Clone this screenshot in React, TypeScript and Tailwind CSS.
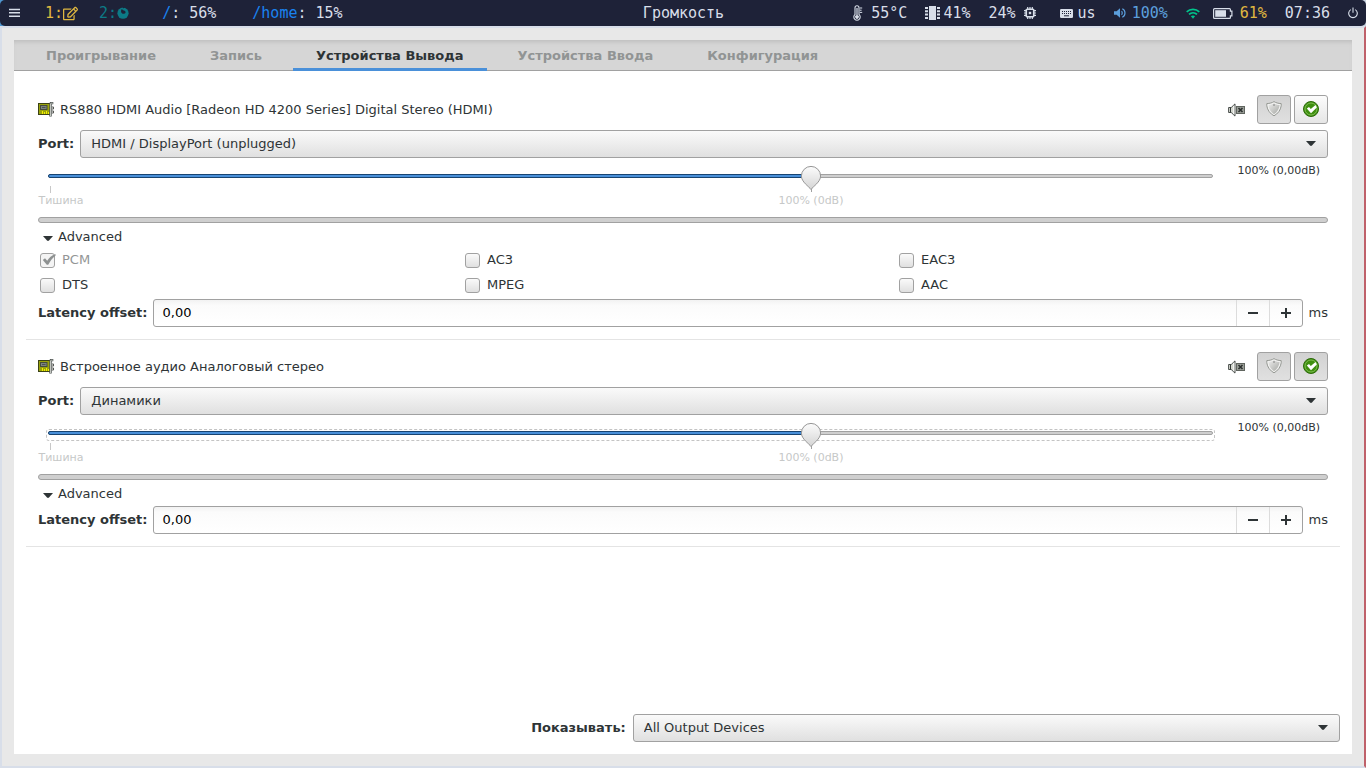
import { useState } from "react";
import type { ReactNode } from "react";
import { FaRegEdit } from "react-icons/fa";

function MenuIcon() {
  return (
    <svg width="11" height="10" viewBox="0 0 11 10" aria-hidden="true">
      <path d="M0 1.5h11M0 4.8h11M0 8.2h11" stroke="currentColor" strokeWidth="1.4" />
    </svg>
  );
}

function FirefoxIcon() {
  return (
    <svg width="12" height="12" viewBox="0 0 12 12" aria-hidden="true">
      <circle cx="6" cy="6.200" r="5.600" fill="currentColor" />
      <path d="M4.500 2.200c1.200.2 1.400 1 2.300 1.200 1.200.3 2.100 1.200 1.700 2.300-.5 1.200-2.200 1.500-3.300.8C4 5.800 3.600 4 4.500 2.200z" fill="#1e2238" />
      <path d="M5.400 0L7.800 0 6.600 1.500z" fill="#1e2238" />
    </svg>
  );
}

function ThermometerIcon() {
  return (
    <svg width="10" height="16" viewBox="0 0 10 16" fill="none" aria-hidden="true">
      <path d="M2 9.5V2.7a2 2 0 0 1 4 0v6.8a3.2 3.2 0 1 1-4 0z" stroke="currentColor" strokeWidth="1.1" />
      <path d="M3.4 3h1.2v7.2a1.8 1.8 0 1 1-1.2 0z" fill="currentColor" />
      <path d="M6.8 3h2.4M6.8 5.2h1.8M6.8 7.4h2.4" stroke="currentColor" strokeWidth="1" />
    </svg>
  );
}

function MemoryIcon() {
  return (
    <svg width="15" height="14" viewBox="0 0 15 14" aria-hidden="true">
      <path d="M4 0h7v14H4z" fill="currentColor" />
      <path d="M1.500 1v12M13.500 1v12" stroke="currentColor" strokeWidth="3" strokeDasharray="2 1.300" />
    </svg>
  );
}

function ChipIcon() {
  return (
    <svg width="12" height="12" viewBox="0 0 12 12" fill="none" aria-hidden="true">
      <rect x="2.250" y="2.250" width="7.500" height="7.500" rx="1" stroke="currentColor" strokeWidth="1.700" />
      <rect x="4.800" y="4.800" width="2.400" height="2.400" fill="currentColor" />
      <path d="M3.700 0v2M6 0v2M8.300 0v2M3.700 10v2M6 10v2M8.300 10v2M0 3.700h2M0 6h2M0 8.300h2M10 3.700h2M10 6h2M10 8.300h2" stroke="currentColor" strokeWidth="1.200" />
    </svg>
  );
}

function KeyboardIcon() {
  return (
    <svg width="13" height="9" viewBox="0 0 13 9" aria-hidden="true">
      <rect width="13" height="9" rx="1.2" fill="currentColor" />
      <path d="M2 2.5h9M2 4.5h9" stroke="#1e2238" strokeDasharray="1 1" />
      <path d="M4 6.8h5" stroke="#1e2238" />
    </svg>
  );
}

function VolumeIcon() {
  return (
    <svg width="12" height="10" viewBox="0 0 12 10" fill="none" aria-hidden="true">
      <path d="M0 3.2h2.6L6 .3v9.4L2.6 6.8H0z" fill="currentColor" />
      <path d="M7.5 3.2c1 .9 1 2.7 0 3.6M8.3.8c3.6 1.6 3.6 6.8 0 8.4" stroke="currentColor" strokeWidth="1.2" />
    </svg>
  );
}

function WifiIcon() {
  return (
    <svg width="14" height="11" viewBox="0 0 14 11" fill="none" aria-hidden="true">
      <path d="M.7 3.9c3.500-3.400 9.100-3.400 12.600 0M3 6.400c2.300-2.200 5.700-2.200 8 0" stroke="currentColor" strokeWidth="1.700" />
      <path d="M4.900 8.300c1.200-1.100 3-1.100 4.200 0L7 10.800z" fill="currentColor" />
    </svg>
  );
}

function BatteryIcon() {
  return (
    <svg width="20" height="11" viewBox="0 0 20 11" fill="none" aria-hidden="true">
      <path d="M1.5.6h15q.9 0 .9.9v1.700h1.500v4.600h-1.500v1.700q0 .9-.9.9h-15q-.9 0-.9-.9v-8q0-.9.9-.9z" stroke="currentColor" strokeWidth="1.200" />
      <path d="M2.200 2.200H13v6.600H2.200z" fill="currentColor" />
    </svg>
  );
}

function PowerIcon() {
  return (
    <svg width="10" height="12" viewBox="0 0 10 12" fill="none" aria-hidden="true">
      <path d="M2.800 2.600a4.300 4.300 0 1 0 4.400 0M5 .4v5.400" stroke="currentColor" strokeWidth="1.100" />
    </svg>
  );
}

function CardIcon() {
  return (
    <svg width="16" height="16" viewBox="0 0 16 16" aria-hidden="true">
      <rect x=".5" y="1.500" width="12" height="11" fill="#9aa30c" stroke="#3c4216" />
      <rect x="2.500" y="3.500" width="6.500" height="4" fill="#7c8480" stroke="#454c3c" />
      <path d="M4 5.500h3.500" stroke="#4c5350" />
      <path d="M4.500 9v3M6.500 10v2M8.500 9v3M10.500 10v2" stroke="#f3f000" />
      <path d="M12.500 14.500V2q0-1 1-1h1.800" fill="none" stroke="#4b514f" strokeWidth="2.400" />
      <path d="M12.500 14V2q0-.8.800-.8h1.500" fill="none" stroke="#c4c7c1" />
      <path d="M13.800 5h1.700v2h-1.700M13.800 9h1.700v2h-1.700" fill="none" stroke="#555753" />
    </svg>
  );
}

function MutedIcon() {
  return (
    <svg width="17" height="14" viewBox="0 0 17 14" aria-hidden="true">
      <path d="M.6 4.500h2.600L7 .9v12.200L3.200 9.500H.6z" fill="#d3d7cf" stroke="#4a4f4c" />
      <path d="M2.500 4.500v5" stroke="#333835" />
      <path d="M5.800 2.800v8.400" stroke="#fff" />
      <rect x="8.500" y="3.500" width="8" height="7" fill="#999d97" stroke="#60655f" />
      <path d="M10.500 5l4 4M14.500 5l-4 4" stroke="#2a2f2d" strokeWidth="1.600" />
    </svg>
  );
}

function ShieldIcon() {
  return (
    <svg width="16" height="16" viewBox="0 0 16 16" aria-hidden="true">
      <defs>
        <linearGradient id="shield" x1="0" y1="0" x2="1" y2="1">
          <stop offset="0" stopColor="#ededec" />
          <stop offset="1" stopColor="#a5a7a3" />
        </linearGradient>
      </defs>
      <path d="M8 .6C6.200 1.800 3.700 2.500.8 2.600v2.200C1.400 9 4 12.700 8 14.800c4-2.100 6.600-5.800 7.200-10V2.600C12.300 2.500 9.800 1.800 8 .6z" fill="#f2f2f1" stroke="#959893" />
      <path d="M8 2.300C6.400 3.400 4.600 4 2.400 4.100 2.800 7.900 4.800 11.300 8 13.200c3.200-1.900 5.200-5.300 5.600-9.100C11.400 4 9.600 3.400 8 2.300z" fill="url(#shield)" />
      <circle cx="8" cy="4" r=".8" fill="#777" />
    </svg>
  );
}

function DefaultIcon() {
  return (
    <svg width="16" height="16" viewBox="0 0 16 16" aria-hidden="true">
      <circle cx="8" cy="8" r="7.500" fill="#3f8f10" stroke="#2d6b0b" />
      <circle cx="8" cy="8" r="6" fill="none" stroke="#8cc760" strokeWidth=".8" />
      <path d="M3.800 7.600L6 6l1.800 2L12.500 4l1.300 2.400L8 12.300z" fill="#fff" />
    </svg>
  );
}

function Arrow({ className = "" }: { className?: string }) {
  return (
    <svg className={className} width="10" height="5" viewBox="0 0 10 5" aria-hidden="true">
      <path d="M0 0h10L6 4.600q-1 .8-2 0z" fill="#2e3436" />
    </svg>
  );
}

function TopBar() {
  return (
    <header className="grid h-[26px] shrink-0 grid-cols-[1fr_auto_1fr] items-center rounded-[5px] bg-[#1e2238] pr-2 pl-[9px] font-['DejaVu_Sans_Mono',monospace] text-[15px] leading-5 whitespace-pre text-[#d8dee9]">
      <nav className="flex items-center">
        <button aria-label="Меню" className="mr-[25px]">
          <MenuIcon />
        </button>
        <button className="mr-[21px] flex items-center text-[#e0b840]">
          1:<FaRegEdit size={15} />
        </button>
        <button className="mr-[33px] flex items-center text-[#0c7a86]">
          2:<FirefoxIcon />
        </button>
        <span className="mr-9">
          <span className="text-[#1a82f0]">/</span>: 56%
        </span>
        <span>
          <span className="text-[#1a82f0]">/home</span>: 15%
        </span>
      </nav>
      <h1>Громкость</h1>
      <div className="flex items-center justify-end">
        <span className="mr-[18px] flex items-center gap-2">
          <ThermometerIcon />
          55°C
        </span>
        <span className="mr-[18px] flex items-center gap-[3px]">
          <MemoryIcon />
          41%
        </span>
        <span className="mr-6 flex items-center gap-2">
          24%
          <ChipIcon />
        </span>
        <span className="mr-[18px] flex items-center gap-[5px]">
          <KeyboardIcon />
          us
        </span>
        <span className="mr-[18px] flex items-center gap-[6px] text-[#5c9fdc]">
          <VolumeIcon />
          100%
        </span>
        <span className="mr-[13px] text-[#00c48c]">
          <WifiIcon />
        </span>
        <span className="mr-[18px] flex items-center gap-[7px]">
          <BatteryIcon />
          <span className="text-[#e0b840]">61%</span>
        </span>
        <time className="mr-[18px]">07:36</time>
        <button aria-label="Выключение">
          <PowerIcon />
        </button>
      </div>
    </header>
  );
}

function Combo({ id, options, label }: { id: string; options: string[]; label?: string }) {
  return (
    <div className="relative w-full">
      <select
        id={id}
        aria-label={label}
        className="block h-7 w-full appearance-none rounded-[3px] border border-[#a1a1a1] bg-linear-to-b from-[#fafafa] to-[#e0e0e0] pr-8 pl-[10px] text-[13px] text-[#2e3436]"
      >
        {options.map((o) => (
          <option key={o}>{o}</option>
        ))}
      </select>
      <Arrow className="pointer-events-none absolute top-[11px] right-3" />
    </div>
  );
}

function IconToggle({ label, pressed, children }: { label: string; pressed: boolean; children: ReactNode }) {
  const [on, setOn] = useState(pressed);
  return (
    <button
      aria-label={label}
      aria-pressed={on}
      onClick={() => setOn(!on)}
      className={
        "flex h-[29px] w-[34px] items-center justify-center rounded-[3px] border border-[#a1a1a1] pb-px " +
        (on ? "bg-linear-to-b from-[#d2d2d2] to-[#e0e0e0]" : "bg-linear-to-b from-[#fcfcfc] to-[#e6e6e6]")
      }
    >
      {children}
    </button>
  );
}

function VolumeSlider({ name, focused }: { name: string; focused: boolean }) {
  const [volume, setVolume] = useState(100);
  const max = 152.7;
  const percent = (v: number) => `${(v / max) * 100}%`;
  return (
    <div className="flex h-[59px] items-start">
      <div className="flex-1 pr-3 pl-[10px]">
        <div className="relative h-[52px]">
          {focused && (
            <div className="absolute -inset-x-[2px] top-[14px] h-3 rounded-[3px] border border-dashed border-[#c4c4c4]" />
          )}
          <div className="absolute inset-x-0 top-4 h-1 rounded-full border border-[#a1a1a1] bg-[#cfcfcf]" />
          <div
            className="absolute top-4 left-0 h-1 rounded-full border border-[#184472] bg-[#4a90d9]"
            style={{ width: percent(volume) }}
          />
          <span className="absolute top-7 left-[2px] h-[7px] w-px bg-[#c8c8c8]" />
          <span className="absolute top-9 left-[13px] -translate-x-1/2 text-[11px] leading-[14px] text-[#c6c8c8]">
            Тишина
          </span>
          <span className="absolute top-6 h-[10px] w-px bg-[#a1a1a1]" style={{ left: percent(100) }} />
          <span
            className="absolute top-9 -translate-x-1/2 text-[11px] leading-[14px] whitespace-nowrap text-[#c6c8c8]"
            style={{ left: percent(100) }}
          >
            100% (0dB)
          </span>
          <svg
            className="absolute top-[7px] -translate-x-1/2"
            style={{ left: percent(volume) }}
            width="21"
            height="25"
            viewBox="0 0 21 25"
            aria-hidden="true"
          >
            <defs>
              <linearGradient id="knob" x1="0" y1="0" x2="0" y2="1">
                <stop offset="0" stopColor="#fcfcfc" />
                <stop offset="1" stopColor="#d4d4d4" />
              </linearGradient>
            </defs>
            <path
              d="M10.500 24.500C8.500 21.500.9 17 .9 11a9.600 9.600 0 1 1 19.200 0C20.100 17 12.500 21.500 10.500 24.500z"
              fill="url(#knob)"
              stroke="#969696"
            />
          </svg>
          <input
            type="range"
            aria-label={`Громкость: ${name}`}
            min={0}
            max={153}
            value={volume}
            onChange={(e) => setVolume(Number(e.target.value))}
            className="absolute inset-x-0 top-2 h-5 w-full cursor-pointer appearance-none bg-transparent outline-none [&::-webkit-slider-thumb]:h-5 [&::-webkit-slider-thumb]:w-5 [&::-webkit-slider-thumb]:appearance-none"
          />
        </div>
      </div>
      <output className="w-[103px] pt-[6px] pr-2 text-right text-[11px] leading-[14px]">{volume}% (0,00dB)</output>
    </div>
  );
}

function Check({ label, locked = false }: { label: string; locked?: boolean }) {
  const [on, setOn] = useState(locked);
  return (
    <label className={"flex h-[25px] items-center gap-[7px] pl-[2px] " + (locked ? "text-[#939696]" : "")}>
      <span className="relative h-[15px] w-[15px]">
        <input
          type="checkbox"
          checked={on}
          disabled={locked}
          onChange={() => setOn(!on)}
          className="block h-[15px] w-[15px] appearance-none rounded-[3px] border border-[#a1a1a1] bg-linear-to-b from-[#fafafa] to-[#e0e0e0] disabled:bg-none disabled:bg-[#f4f4f4]"
        />
        {on && (
          <svg className="pointer-events-none absolute top-0 left-[2px]" width="14" height="14" viewBox="0 0 14 14" aria-hidden="true">
            <path d="M.8 7l2.200-1.700 2.200 2.400C7 5 9.500 2.300 13.500 1v1.700C10.500 5 8.500 7.700 6.200 11.700H4.800z" fill="#8e9191" />
          </svg>
        )}
      </span>
      <span className="pb-px">{label}</span>
    </label>
  );
}

type DeviceInfo = {
  id: string;
  name: string;
  port: string;
  formats: string[];
  fallback: boolean;
  focused: boolean;
};

function Device({ device }: { device: DeviceInfo }) {
  const [open, setOpen] = useState(true);
  return (
    <section className="border-b border-[#e4e4e4] p-3">
      <div className="mb-[6px] flex items-center">
        <CardIcon />
        <h2 className="ml-[6px] flex-1">{device.name}</h2>
        <button aria-label="Выключить звук" className="mr-3">
          <MutedIcon />
        </button>
        <div className="flex gap-[3px]">
          <IconToggle label="Заблокировать каналы" pressed>
            <ShieldIcon />
          </IconToggle>
          <IconToggle label="По умолчанию" pressed={device.fallback}>
            <DefaultIcon />
          </IconToggle>
        </div>
      </div>
      <div className="flex items-center gap-[6px]">
        <label htmlFor={`${device.id}-port`} className="font-bold">
          Port:
        </label>
        <Combo id={`${device.id}-port`} options={[device.port]} />
      </div>
      <VolumeSlider name={device.name} focused={device.focused} />
      <div className="h-[6px] rounded-full border border-[#a1a1a1] bg-[#cfcfcf]" />
      <button
        aria-expanded={open}
        onClick={() => setOpen(!open)}
        className="flex h-[25px] items-center gap-[5px] pt-[2px] pl-[5px]"
      >
        <Arrow className="mt-1" />
        Advanced
      </button>
      {open && (
        <>
          {device.formats.length > 0 && (
            <div className="grid grid-cols-[425fr_434fr_431fr]">
              {device.formats.map((f) => (
                <Check key={f} label={f} locked={f === "PCM"} />
              ))}
            </div>
          )}
          <div className="flex items-center pt-px">
            <label htmlFor={`${device.id}-latency`} className="mr-[6px] font-bold whitespace-nowrap">
              Latency offset:
            </label>
            <div className="flex h-7 flex-1 overflow-hidden rounded-[3px] border border-[#a1a1a1] bg-linear-to-b from-[#f2f2f2] via-[#fbfbfb] via-20% to-white">
              <input
                id={`${device.id}-latency`}
                defaultValue="0,00"
                className="min-w-0 flex-1 bg-transparent px-2 text-[13px] text-black outline-none"
              />
              <button aria-label="Уменьшить" className="flex w-[33px] items-center justify-center border-l border-[#dcdcdc]">
                <svg width="10" height="10" viewBox="0 0 10 10" aria-hidden="true">
                  <path d="M0 5h10" stroke="#2e3436" strokeWidth="2" />
                </svg>
              </button>
              <button aria-label="Увеличить" className="flex w-[33px] items-center justify-center border-l border-[#dcdcdc]">
                <svg width="10" height="10" viewBox="0 0 10 10" aria-hidden="true">
                  <path d="M0 5h10M5 0v10" stroke="#2e3436" strokeWidth="2" />
                </svg>
              </button>
            </div>
            <span className="ml-[6px]">ms</span>
          </div>
        </>
      )}
    </section>
  );
}

const tabs = ["Проигрывание", "Запись", "Устройства Вывода", "Устройства Ввода", "Конфигурация"];

const devices: DeviceInfo[] = [
  {
    id: "hdmi",
    name: "RS880 HDMI Audio [Radeon HD 4200 Series] Digital Stereo (HDMI)",
    port: "HDMI / DisplayPort (unplugged)",
    formats: ["PCM", "AC3", "EAC3", "DTS", "MPEG", "AAC"],
    fallback: false,
    focused: false,
  },
  {
    id: "analog",
    name: "Встроенное аудио Аналоговый стерео",
    port: "Динамики",
    formats: [],
    fallback: true,
    focused: true,
  },
];

export default function App() {
  return (
    <div className="flex min-h-screen flex-col bg-linear-to-r from-[#4f96cf] to-[#c9d3e0] font-['DejaVu_Sans',sans-serif] text-[13px] leading-4 text-[#2e3436]">
      <TopBar />
      <main className="flex flex-1 flex-col border-2 border-[#d8dee9] border-r-[#bf616a] bg-[#e8e8e8] p-3">
        <div role="tablist" className="flex h-[31px] shrink-0 gap-2 border-b border-[#a1a1a1] bg-[#d6d6d6] pl-[9px] shadow-[inset_0_4px_4px_-2px_#bebebe]">
          {tabs.map((t, i) => (
            <button
              key={t}
              role="tab"
              aria-selected={i === 2}
              className={
                "-mb-px border-b-3 px-[23px] pt-[3px] font-bold whitespace-nowrap " +
                (i === 2 ? "border-[#4a90d9] text-[#2e3436]" : "border-transparent text-[#919494]")
              }
            >
              {t}
            </button>
          ))}
        </div>
        <div className="flex flex-1 flex-col bg-white p-3">
          <div className="flex-1">
            {devices.map((d) => (
              <Device key={d.id} device={d} />
            ))}
          </div>
          <div className="flex items-center">
            <div className="flex-5" />
            <label htmlFor="show" className="mr-[7px] font-bold">
              Показывать:
            </label>
            <div className="flex-7">
              <Combo id="show" options={["All Output Devices"]} />
            </div>
          </div>
        </div>
      </main>
    </div>
  );
}
